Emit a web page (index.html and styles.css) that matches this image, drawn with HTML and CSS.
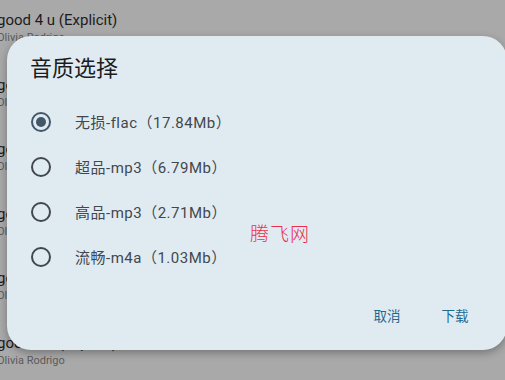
FILE: index.html
```html
<!DOCTYPE html>
<html lang="zh-CN">
<head>
    <meta charset="UTF-8">
    <title>音质选择</title>
    <link rel="stylesheet" href="styles.css">
</head>
<body>

<div class="songList">
    <div class="songItem">
        <div class="songName">good 4 u (Explicit)</div>
        <div class="singer">Olivia Rodrigo</div>
    </div>
    <div class="songItem">
        <div class="songName">good 4 u (Explicit)</div>
        <div class="singer">Olivia Rodrigo</div>
    </div>
    <div class="songItem">
        <div class="songName">good 4 u (Explicit)</div>
        <div class="singer">Olivia Rodrigo</div>
    </div>
    <div class="songItem">
        <div class="songName">good 4 u (Explicit)</div>
        <div class="singer">Olivia Rodrigo</div>
    </div>
    <div class="songItem">
        <div class="songName">good 4 u (Explicit)</div>
        <div class="singer">Olivia Rodrigo</div>
    </div>
    <div class="songItem">
        <div class="songName">good 4 u (Explicit)</div>
        <div class="singer">Olivia Rodrigo</div>
    </div>
</div>

<div class="dialog">
    <div class="dialogTitle">音质选择</div>
    <div class="qualityList">
        <label class="qualityItem">
            <span class="radio checked"></span>
            <span class="qualityName">无损-flac（17.84Mb）</span>
        </label>
        <label class="qualityItem">
            <span class="radio"></span>
            <span class="qualityName">超品-mp3（6.79Mb）</span>
        </label>
        <label class="qualityItem">
            <span class="radio"></span>
            <span class="qualityName">高品-mp3（2.71Mb）</span>
        </label>
        <label class="qualityItem">
            <span class="radio"></span>
            <span class="qualityName">流畅-m4a（1.03Mb）</span>
        </label>
    </div>
    <div class="dialogActions">
        <a class="textButton">取消</a>
        <a class="textButton">下载</a>
    </div>
</div>

<div class="watermark">腾飞网</div>

</body>
</html>
```

FILE: styles.css
```css
body {
    margin: 0;
    background: #a9a9aa;
    font-family: Roboto, "Noto Sans CJK SC", sans-serif;
    overflow: hidden;
}

/*后面被遮住的歌曲列表*/
.songList {
    display: flex;
    flex-direction: column;
    margin-left: -3px;
}

.songItem {
    height: 64.6px;
    padding-top: 10px;
    box-sizing: border-box;
    flex-shrink: 0;
}

.songName {
    color: #1c1c1d;
    font-size: 15px;
    line-height: 20px;
}

.singer {
    color: #5b5b5c;
    font-size: 11px;
    line-height: 16px;
}

/*弹窗*/
.dialog {
    position: absolute;
    left: 7px;
    top: 36px;
    width: 500px;
    height: 314px;
    box-sizing: border-box;
    padding-top: 20px;
    display: flex;
    flex-direction: column;
    background: #e0ebf1;
    border-radius: 24px;
    box-shadow: 0 3px 8px rgba(0, 0, 0, 0.3);
}

.dialogTitle {
    padding-left: 23px;
    color: #1a1c1e;
    font-size: 22px;
    line-height: 26px;
}

.qualityList {
    display: flex;
    flex-direction: column;
    margin-top: 17px;
}

.qualityItem {
    display: flex;
    align-items: center;
    height: 45px;
    padding-left: 24px;
}

.radio {
    width: 16px;
    height: 16px;
    border: 2px solid #42474e;
    border-radius: 50%;
    display: flex;
    align-items: center;
    justify-content: center;
}

.radio.checked {
    border-color: #42576a;
}

.radio.checked::after {
    content: "";
    width: 10px;
    height: 10px;
    border-radius: 50%;
    background: #42576a;
}

.qualityName {
    margin-left: 24px;
    color: #42474e;
    font-size: 15px;
    letter-spacing: 0.5px;
}

.dialogActions {
    display: flex;
    justify-content: flex-end;
    gap: 4px;
    margin-top: auto;
    margin-bottom: 15px;
    padding-right: 20px;
}

.textButton {
    width: 64px;
    height: 40px;
    display: flex;
    align-items: center;
    justify-content: center;
    color: #1f6a8e;
    font-size: 13.5px;
}

.watermark {
    position: absolute;
    left: 250px;
    top: 219px;
    color: #e8304e;
    font-family: "Noto Sans CJK SC", sans-serif;
    font-weight: 300;
    font-size: 19px;
    letter-spacing: 1px;
}
```
